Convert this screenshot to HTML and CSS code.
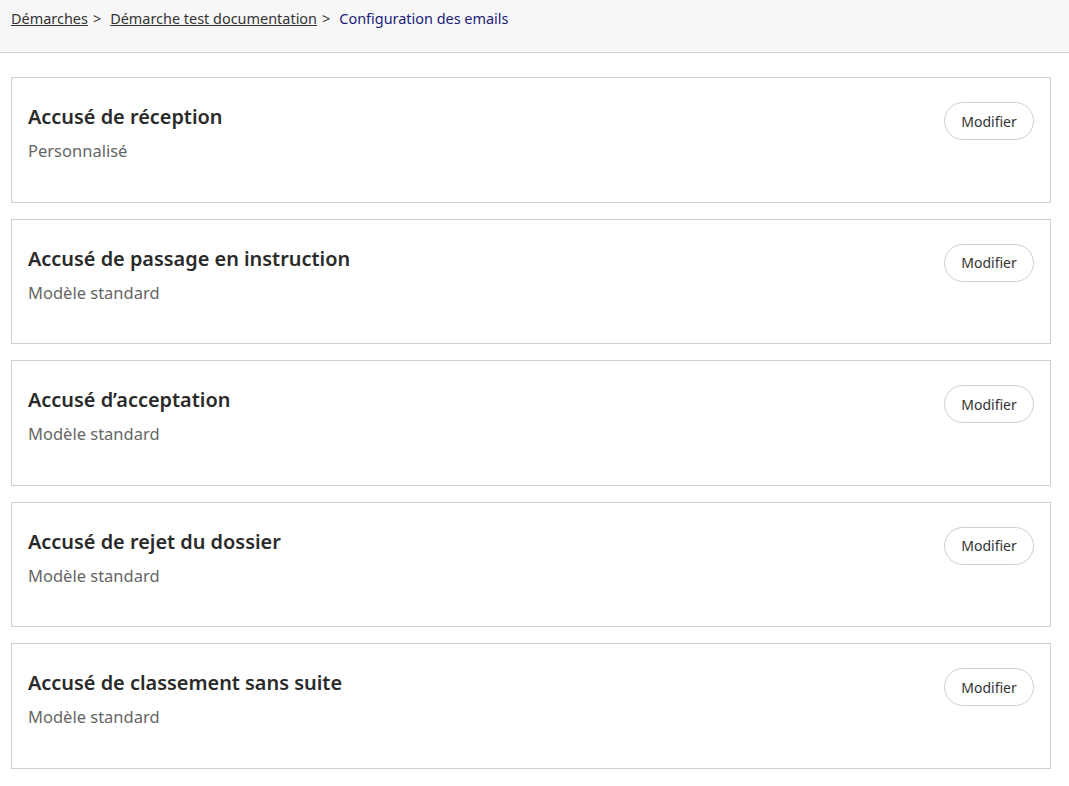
FILE: index.html
```html
<!DOCTYPE html>
<html lang="fr">
<head>
<meta charset="utf-8">
<title>Configuration des emails</title>
<link rel="stylesheet" href="styles.css">
</head>
<body>
<header class="topbar">
  <nav class="breadcrumb">
    <a href="#" class="crumb-link">Démarches</a><span class="sep">&gt;</span>
    <a href="#" class="crumb-link">Démarche test documentation</a><span class="sep">&gt;</span>
    <span class="crumb-current">Configuration des emails</span>
  </nav>
</header>
<main class="list">
  <section class="card">
    <div class="card-text">
      <h2 class="card-title">Accusé de réception</h2>
      <p class="card-sub">Personnalisé</p>
    </div>
    <button class="btn">Modifier</button>
  </section>
  <section class="card">
    <div class="card-text">
      <h2 class="card-title">Accusé de passage en instruction</h2>
      <p class="card-sub">Modèle standard</p>
    </div>
    <button class="btn">Modifier</button>
  </section>
  <section class="card">
    <div class="card-text">
      <h2 class="card-title">Accusé d’acceptation</h2>
      <p class="card-sub">Modèle standard</p>
    </div>
    <button class="btn">Modifier</button>
  </section>
  <section class="card">
    <div class="card-text">
      <h2 class="card-title">Accusé de rejet du dossier</h2>
      <p class="card-sub">Modèle standard</p>
    </div>
    <button class="btn">Modifier</button>
  </section>
  <section class="card">
    <div class="card-text">
      <h2 class="card-title">Accusé de classement sans suite</h2>
      <p class="card-sub">Modèle standard</p>
    </div>
    <button class="btn">Modifier</button>
  </section>
</main>
</body>
</html>
```
FILE: styles.css
```css
* { box-sizing: border-box; }
html, body { margin: 0; padding: 0; background: #fff; }
body {
  font-family: "Noto Sans", "Open Sans", sans-serif;
  color: #333;
}
.topbar {
  background: #f7f7f7;
  border-bottom: 1px solid #d4d4d4;
  height: 53px;
  padding: 9px 11px 0;
}
.breadcrumb {
  font-size: 14.45px;
  line-height: 20px;
  display: flex;
  align-items: center;
}
.crumb-link { color: #333; text-decoration: underline; }
.sep { margin: 0 9px 0 5px; color: #333; }
.crumb-current { color: #1b1b7a; }
.list {
  padding: 24px 18px 0 11px;
  display: flex;
  flex-direction: column;
  gap: 16px;
}
.card {
  border: 1px solid #cfcfcf;
  height: 125.5px;
  padding: 24px 16px 0 16px;
  display: flex;
  justify-content: space-between;
  align-items: flex-start;
}
.card-title {
  margin: 2px 0 0;
  font-size: 19.9px;
  font-weight: 600;
  line-height: 26px;
  color: #2a2a2a;
}
.card-sub {
  margin: 10px 0 0;
  font-size: 16.5px;
  line-height: 22px;
  color: #666;
}
.btn {
  font-family: inherit;
  font-size: 14px;
  color: #333;
  background: #fff;
  border: 1px solid #cfcfcf;
  border-radius: 19px;
  width: 90px;
  height: 38px;
  padding: 0;
  margin-top: 0;
  cursor: pointer;
}
```
